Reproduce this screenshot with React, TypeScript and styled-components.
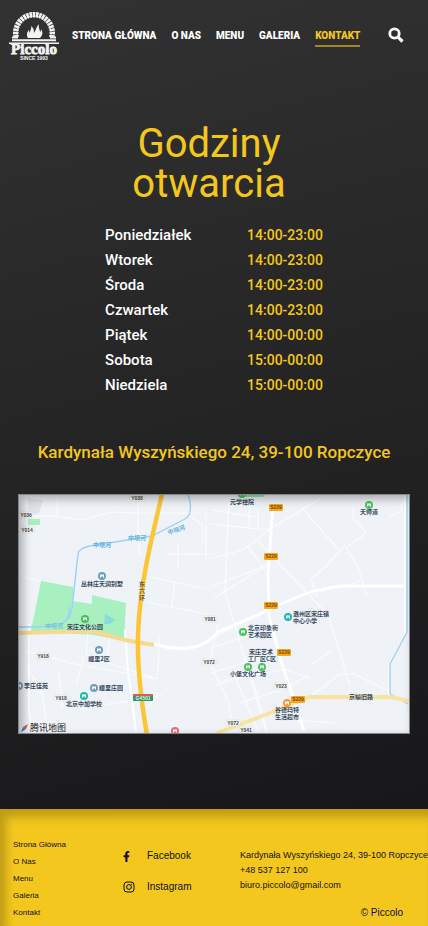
import React from "react";
import styled, { createGlobalStyle } from "styled-components";

const GlobalStyle = createGlobalStyle`
  *, *::before, *::after { box-sizing: border-box; }
  html { height: 100%; }
  body {
    margin: 0;
    min-height: 100%;
    overflow-x: hidden;
    background: #171719;
    font-family: Roboto, "Liberation Sans", sans-serif;
  }
`;

const gold = "#f3c71d";

const Page = styled.div`
  min-height: 100vh;
  display: flex;
  flex-direction: column;
  overflow-x: hidden;
  background: linear-gradient(165deg, #323232 0%, #171719 90%);
`;

const Header = styled.header`
  display: flex;
  align-items: center;
  padding: 8px 24px 8px 8px;
`;

const LogoLink = styled.a`
  display: block;
  width: 52px;
  height: 56px;
  flex: none;
`;

const Nav = styled.nav`
  display: flex;
  gap: 15px;
  margin: 2px 0 0 12px;
`;

const NavLink = styled.a<{ $active?: boolean }>`
  color: ${(p) => (p.$active ? gold : "#fff")};
  border-bottom: 2px solid ${(p) => (p.$active ? "#a5881f" : "transparent")};
  font-size: 10px;
  font-weight: 900;
  line-height: 18px;
  text-decoration: none;
  white-space: nowrap;
`;

const SearchButton = styled.button`
  display: flex;
  margin-left: auto;
  padding: 0 0 2px;
  border: 0;
  background: none;
  color: #fff;
  cursor: pointer;
`;

const Main = styled.main`
  flex: 1;
  display: flex;
  flex-direction: column;
  align-items: center;
  padding: 52px 18px 75px;
`;

const Title = styled.h1`
  margin: 0 10px 0 0;
  max-width: 200px;
  color: ${gold};
  font-size: 40px;
  font-weight: 400;
  line-height: 40px;
  text-align: center;
`;

const Hours = styled.table`
  margin-top: 19px;
  border-collapse: collapse;
  line-height: 25px;
`;

const Day = styled.th`
  width: 142px;
  padding: 0;
  color: #fff;
  font-size: 15px;
  font-weight: 500;
  text-align: left;
`;

const Time = styled.td`
  padding: 0;
  color: ${gold};
  font-size: 14px;
  font-weight: 500;
  white-space: nowrap;
`;

const Address = styled.p`
  margin: 43px 0 30px;
  color: ${gold};
  font-size: 17px;
  font-weight: 500;
  line-height: 23px;
  text-align: center;
`;

const MapFrame = styled.div`
  position: relative;
  width: 100%;
  border: 1px solid #85868a;
  background: #eff3f8;
  &::after {
    content: "";
    position: absolute;
    inset: 0;
    box-shadow: inset 4px 4px 10px rgba(0, 0, 0, 0.3);
    pointer-events: none;
  }
  svg { display: block; width: 100%; height: auto; }
`;

const Footer = styled.footer`
  display: grid;
  grid-template-columns: 110px 117px 1fr;
  padding: 27px 0 5px 13px;
  background: ${gold};
  box-shadow: inset 6px 8px 10px rgba(0, 0, 0, 0.22);
  color: #111;
  font-family: "Liberation Sans", Arial, sans-serif;
`;

const FooterNav = styled.nav`
  display: flex;
  flex-direction: column;
  align-items: flex-start;
`;

const FooterLink = styled.a`
  color: inherit;
  font-size: 8px;
  line-height: 17px;
  text-decoration: none;
`;

const Socials = styled.div`
  display: flex;
  flex-direction: column;
  gap: 15px;
  padding-top: 12px;
`;

const SocialLink = styled.a`
  display: grid;
  grid-template-columns: 24px auto;
  align-items: center;
  color: inherit;
  font-size: 10px;
  line-height: 16px;
  text-decoration: none;
`;

const Contact = styled.address`
  display: flex;
  flex-direction: column;
  padding-top: 12px;
  font-size: 9px;
  font-style: normal;
  line-height: 15px;
  white-space: nowrap;
`;

const ContactLink = styled.a`
  color: inherit;
  text-decoration: none;
`;

const Copyright = styled.small`
  align-self: flex-end;
  margin: auto 25px 0 0;
  font-size: 10px;
  line-height: 16px;
`;

const bricks = Array.from({ length: 21 }, (_, i) => -100 + i * 10);

function Logo() {
  return (
    <svg viewBox="0 0 52 56" width="52" height="56" fill="#f3f3f3" aria-hidden="true">
      <path d="M9 30V25a17 17 0 0 1 34 0v5" fill="none" stroke="#ccc" strokeWidth="1" />
      {bricks.map((a) => (
        <path key={a} d="M24.500 4h3l-.5 5.500h-2z" transform={`rotate(${a} 26 25)`} />
      ))}
      <path d="M4 28.500h6v2H4zM42 28.500h6v2h-6z" />
      <path d="M20 30c-2-3-1-6 1-8 0 2 1 3 1 3 0-3 2-5 1-7 3 2 3 5 3 7 2-3 2-6 5-9-1 4 1 5 1 8 1-1 1-2 1-3 2 3 2 6-1 9z" />
      <path d="M4 31.200h44v2H4zM1 34.500h50v1.500H1z" />
      <text x="26" y="46" textAnchor="middle" fontFamily="Liberation Serif, serif" fontWeight="700" fontSize="15" stroke="#f3f3f3" strokeWidth=".8">Piccolo</text>
      <text x="26" y="52" textAnchor="middle" fontFamily="Liberation Sans, sans-serif" fontWeight="700" fontSize="5">SINCE 1993</text>
    </svg>
  );
}

function SearchIcon() {
  return (
    <svg viewBox="0 0 16 16" width="16" height="16" fill="none" stroke="currentColor" aria-hidden="true">
      <circle cx="6.500" cy="6.500" r="4.700" strokeWidth="2.800" />
      <path d="M10.300 10.300l4.200 4.200" strokeWidth="3.200" />
    </svg>
  );
}

function FacebookIcon() {
  return (
    <svg viewBox="0 0 320 512" width="7" height="11" fill="currentColor" aria-hidden="true">
      <path d="M279 288l14-93h-89v-60c0-25 12-50 52-50h41V7s-37-7-72-7c-73 0-121 44-121 125v70H23v93h81v224h100V288z" />
    </svg>
  );
}

function InstagramIcon() {
  return (
    <svg viewBox="0 0 12 12" width="12" height="12" fill="none" stroke="currentColor" aria-hidden="true">
      <rect x="1" y="1" width="10" height="10" rx="3" />
      <circle cx="6" cy="6" r="2.400" />
      <circle cx="8.800" cy="3.200" r=".6" fill="currentColor" stroke="none" />
    </svg>
  );
}

const places: [string, number, number][] = [
  ["丛林庄天润别墅", 84, 92],
  ["宋庄文化公园", 67, 135],
  ["疃里2区", 81, 167],
  ["李庄佳苑", 18, 194],
  ["疃里庄园", 93, 196],
  ["北京中加学校", 66, 212],
  ["元学禅院", 224, 10],
  ["天师道", 351, 20],
  ["潞州区宋庄镇", 293, 122],
  ["中心小学", 287, 129],
  ["北京印象街", 245, 136],
  ["艺术园区", 242, 143],
  ["宋庄艺术", 243, 160],
  ["工厂区C区", 244, 167],
  ["小堡文化广场", 230, 182],
  ["谷德玛特", 269, 218],
  ["生活超市", 269, 225],
  ["京榆旧路", 343, 205],
];

const roadTags: [string, number, number][] = [
  ["Y038", 119, 4], ["Y036", 8, 21], ["Y014", 9, 36], ["Y081", 192, 125],
  ["Y918", 25, 162], ["Y918", 43, 204], ["Y072", 191, 168], ["Y023", 263, 192],
  ["Y072", 215, 229], ["Y041", 228, 236],
];

const highwayTags: [number, number][] = [[258, 13], [253, 62], [253, 111], [266, 158], [280, 205]];

const pins: [number, number, string][] = [
  [84, 82, "#6a9ebb"], [81, 156, "#6a9ebb"], [76, 194, "#6a9ebb"], [1, 192, "#6a9ebb"],
  [67, 125, "#48bd55"], [66, 202, "#20b8a7"], [224, 0, "#48c65b"], [351, 11, "#48c65b"],
  [270, 123, "#20b8b6"], [225, 138, "#48c65b"], [230, 173, "#48c65b"], [244, 173, "#48c65b"],
  [269, 209, "#f99540"], [157, 237, "#ee6871"],
];

function StreetMap() {
  return (
    <svg viewBox="1 1 390 238" role="img" aria-label="Mapa">
      <path d="M10 4l15 2-4 13-10 2z" fill="#dfe2e7" />
      <path d="M10 25h12v6H10zM23 87l32 6v14l19 3v-9l34 8-2 38-30-6-63-4z" fill="#a9f0c1" />
      <path d="M87 120l4 2 6 4-5 4h-6z" fill="#86dcd9" />
      <path d="M228 0h20l-3 3h-18z" fill="#8bebad" />
      <g fill="none" stroke="#fff" strokeWidth="1.200" opacity=".7">
        <path d="M0 23l37-1 27 4 30-8 26 1h62M39 0v22M120 10v27l2 25M0 81l23 7M0 38l8-20" />
        <path d="M132 83l56 12M129 108l63 13M157 87l-4 28M149 60h49M160 51v24M188 20v48M170 21l15 10v18M70 138l-2 23 71 24 3-42M92 140l-3 27M8 157l44 12 87 16M9 173l15 24 5 35M41 177l3 37M66 164l-8 27M62 215l82-14M129 214l13-14" />
        <path d="M192 30l60 6M194 16l44 7M211 7l-4 91 41 139M232 8l-1 26M240 15v20M192 65l35-10 25-20 50-30M192 93l52-20M196 104l55-34M229 51l20 28M238 45l72 76 22 70M285 15l35 40M336 12l-2 11 14 16-20 15 12 19 9 30M327 51l-20 22-14 12 7 19M372 23l12-7V8M325 94l20-9" />
        <path d="M200 130l-8 39 18 38 6 30M214 176l26 61M229 166l20 71M192 154l37-12M200 188l66-13 26 9M192 179l54-16M196 192l35-11M221 209l45-14 25-14M276 226l40 3M294 170l20-14M292 203l30-23h14l36 18M193 145l58-29" />
      </g>
      <g fill="none" stroke="#fff" strokeWidth="3">
        <path d="M255 10l-5 70 1 42 12 45 23 70M136 150q43 13 64-12l42-18q54-26 62-24 12-4 24-4h62" />
        <path d="M107 136l3 42 8 60M11 130v87l3 22M371 201v-30l16-30V0" strokeWidth="2" />
      </g>
      <g fill="none" stroke="#9bd1f8" strokeWidth="1.400">
        <path d="M51 125l3-11 6-54q1-6 12-8l62-10 33-17q7-4 5-17l-2-9M0 133h14l23-1q15-2 14-19" />
        <path d="M372 200v-30l17-32V0M372 200l18 10" />
      </g>
      <path d="M0 139l75-2 32 9 29 5" fill="none" stroke="#f6d98f" strokeWidth="4" />
      <path d="M199 239l61-23 31-13h82l18 4" fill="none" stroke="#f8e39f" strokeWidth="4" />
      <path d="M144 0l-11 48q-12 53-13 95-1 40 9 98" fill="none" stroke="#fac537" strokeWidth="4.500" />
      <g fontFamily="Noto Sans CJK SC, sans-serif" fontSize="6" textAnchor="middle" fill="#36485e" fontWeight="700">
        {places.map(([name, x, y]) => <text key={name} x={x} y={y}>{name}</text>)}
        <g fill="#5db1da">
          <text x="84" y="53">中坝河</text>
          <text x="119" y="46">中坝河</text>
          <text x="159" y="38" transform="rotate(-20 159 38)">中坝河</text>
          <text x="36" y="134" fontWeight="400">中坝河</text>
        </g>
        <g fill="#655b43">
          <text x="124" y="92">东</text><text x="124" y="99">六</text><text x="124" y="106">环</text>
        </g>
      </g>
      <g fontFamily="Liberation Sans, sans-serif" fontSize="5" fontWeight="700" textAnchor="middle" fill="#444">
        {roadTags.map(([name, x, y], i) => (
          <g key={i}>
            <rect x={x - 7} y={y - 3} width="14" height="6" rx="1" fill="#fafafa" stroke="#d2d4d6" strokeWidth=".5" />
            <text x={x} y={y + 2}>{name}</text>
          </g>
        ))}
        {highwayTags.map(([x, y]) => (
          <g key={`${x}-${y}`}>
            <rect x={x - 7} y={y - 3} width="14" height="7" rx="1" fill="#faa819" />
            <text x={x} y={y + 2} fill="#714500">S229</text>
          </g>
        ))}
        <rect x="115" y="200" width="20" height="7" rx="1" fill="#329367" />
        <path d="M115 200h20v2h-20z" fill="#dc5d56" />
        <text x="125" y="206" fill="#d9f5e7">G4501</text>
      </g>
      {pins.map(([x, y, color]) => (
        <g key={`${x}-${y}`}>
          <circle cx={x} cy={y} r="4" fill={color} />
          <path d={`M${x - 2} ${y - 1.5}h4v3h-1v-1h-2v1h-1z`} fill="#fff" />
        </g>
      ))}
      <path d="M3 238l2-5 3 2z" fill="#2387df" />
      <path d="M10 230l-5 3 3 2z" fill="#ed4d3e" />
      <text x="12" y="237" fill="#222" fontSize="9" fontFamily="Noto Sans CJK SC, sans-serif">腾讯地图</text>
    </svg>
  );
}

const navigation = ["Strona Główna", "O Nas", "Menu", "Galeria", "Kontakt"];
const hours = [
  ["Poniedziałek", "14:00-23:00"],
  ["Wtorek", "14:00-23:00"],
  ["Środa", "14:00-23:00"],
  ["Czwartek", "14:00-23:00"],
  ["Piątek", "14:00-00:00"],
  ["Sobota", "15:00-00:00"],
  ["Niedziela", "15:00-00:00"],
];

export default function App() {
  return (
    <Page>
      <GlobalStyle />
      <Header>
        <LogoLink href="#" aria-label="Piccolo"><Logo /></LogoLink>
        <Nav>
          {navigation.map((item) => (
            <NavLink key={item} href="#" $active={item === "Kontakt"}>{item.toUpperCase()}</NavLink>
          ))}
        </Nav>
        <SearchButton type="button" aria-label="Szukaj"><SearchIcon /></SearchButton>
      </Header>
      <Main>
        <Title>Godziny otwarcia</Title>
        <Hours>
          <tbody>
            {hours.map(([day, time]) => (
              <tr key={day}><Day scope="row">{day}</Day><Time>{time}</Time></tr>
            ))}
          </tbody>
        </Hours>
        <Address>Kardynała Wyszyńskiego 24, 39-100 Ropczyce</Address>
        <MapFrame><StreetMap /></MapFrame>
      </Main>
      <Footer>
        <FooterNav>
          {navigation.map((item) => <FooterLink key={item} href="#">{item}</FooterLink>)}
        </FooterNav>
        <Socials>
          <SocialLink href="#"><FacebookIcon />Facebook</SocialLink>
          <SocialLink href="#"><InstagramIcon />Instagram</SocialLink>
        </Socials>
        <Contact>
          <span>Kardynała Wyszyńskiego 24, 39-100 Ropczyce</span>
          <ContactLink href="tel:+48537127100">+48 537 127 100</ContactLink>
          <ContactLink href="mailto:biuro.piccolo@gmail.com">biuro.piccolo@gmail.com</ContactLink>
          <Copyright>© Piccolo</Copyright>
        </Contact>
      </Footer>
    </Page>
  );
}
